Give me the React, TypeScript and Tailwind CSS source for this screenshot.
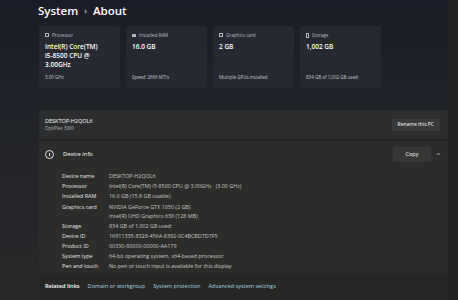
import React from "react";

const font = { fontFamily: '"Open Sans", "Noto Sans", sans-serif' };

function Card({ icon, label, value, foot }: { icon: React.ReactNode; label: string; value: React.ReactNode; foot: string }) {
  return (
    <div className="w-[81px] h-[62px] rounded-[3px] bg-[#262932] flex flex-col px-[6px] pt-[6px] pb-[7px]">
      <div className="flex items-center gap-[3px] text-[4.6px] text-[#b9bcc3] h-[6px]">
        {icon}
        <span>{label}</span>
      </div>
      <div className="mt-[4px] text-[6.5px] leading-[9px] font-semibold text-white">{value}</div>
      <div className="mt-auto text-[4.5px] text-[#c9cbd0]">{foot}</div>
    </div>
  );
}

const Sq = () => <span className="inline-block w-[4px] h-[4px] border-[0.7px] border-[#b9bcc3] rounded-[0.5px]" />;

const rows: [string, string[]][] = [
  ["Device name", ["DESKTOP-H2QOL6"]],
  ["Processor", ["Intel(R) Core(TM) i5-8500 CPU @ 3.00GHz   (3.00 GHz)"]],
  ["Installed RAM", ["16.0 GB (15.8 GB usable)"]],
  ["Graphics card", ["NVIDIA GeForce GTX 1050 (2 GB)", "Intel(R) UHD Graphics 630 (128 MB)"]],
  ["Storage", ["834 GB of 1,002 GB used"]],
  ["Device ID", ["16911335-8328-456A-8392-0C4BCBD7D7F5"]],
  ["Product ID", ["00330-80000-00000-AA179"]],
  ["System type", ["64-bit operating system, x64-based processor"]],
  ["Pen and touch", ["No pen or touch input is available for this display"]],
];

export default function App() {
  return (
    <div style={font} className="w-[458px] h-[300px] overflow-hidden flex bg-gradient-to-b from-[#1a1d27] via-[#23252a] to-[#29292a]">
      <div className="flex-1 flex flex-col pl-[38px]">
        <div className="h-[22px] flex items-center gap-[6px] text-[11.5px] font-semibold text-white">
          <span>System</span>
          <span className="text-[8px] text-[#c8cad0]">›</span>
          <span>About</span>
        </div>
        <div className="mt-[4px] ml-[1px] flex gap-[6px]">
          <Card icon={<Sq />} label="Processor" value={<>Intel(R) Core(TM)<br />i5-8500 CPU @<br />3.00GHz</>} foot="3.00 GHz" />
          <Card icon={<span className="inline-block w-[4px] h-[3px] bg-[#b9bcc3] rounded-[0.5px]" />} label="Installed RAM" value="16.0 GB" foot="Speed: 2666 MT/s" />
          <Card icon={<Sq />} label="Graphics card" value="2 GB" foot="Multiple GPUs installed" />
          <Card icon={<span className="inline-block w-[3px] h-[5px] border-[0.7px] border-[#b9bcc3] rounded-[0.5px]" />} label="Storage" value="1,002 GB" foot="834 GB of 1,002 GB used" />
        </div>
        <div className="mt-[22px] ml-[1px] flex flex-col">
          <div className="h-[29px] bg-[#2c2d2e] rounded-t-[3px] flex items-center pl-[6px] pr-[8px]">
            <div className="flex flex-col">
              <span className="text-[5.5px] text-white leading-[8px]">DESKTOP-H2QOL6</span>
              <span className="text-[4.5px] text-[#b7b8b8] leading-[7px]">OptiPlex 3060</span>
            </div>
            <div className="ml-auto h-[12px] px-[6px] flex items-center rounded-[2px] bg-[#38393a] text-[5px] text-white">Rename this PC</div>
          </div>
          <div className="h-[2px]" />
          <div className="h-[132px] bg-[#2c2d2a] flex flex-col">
            <div className="h-[26px] flex items-center pl-[6px] pr-[7px]">
              <span className="w-[9px] h-[9px] rounded-full border-[0.8px] border-[#e6e6e6] flex items-center justify-center">
                <span className="w-[0.8px] h-[3px] bg-[#e6e6e6]" />
              </span>
              <span className="ml-[9px] text-[5.8px] text-white">Device info</span>
              <div className="ml-auto w-[38px] h-[15px] flex items-center justify-center rounded-[2px] bg-[#363734] text-[5.5px] text-white">Copy</div>
              <svg className="ml-[5px]" width="5" height="4" viewBox="0 0 5 4"><path d="M0.8 3 L2.5 1.3 L4.2 3" stroke="#d0d0d0" strokeWidth="0.8" fill="none" /></svg>
            </div>
            <div className="pl-[23px] flex flex-col mt-[4px]">
              {rows.map(([k, v]) => (
                <div key={k} className={"flex text-[5.4px] " + (v.length > 1 ? "mt-[2px] leading-[9px]" : "leading-[10px]")}>
                  <span className="w-[47px] text-[#e8e8e8]">{k}</span>
                  <div className="flex flex-col text-[#c9c9c6]">
                    {v.map((l) => (
                      <span key={l} className="whitespace-pre">{l}</span>
                    ))}
                  </div>
                </div>
              ))}
            </div>
          </div>
          <div className="h-[27px] bg-[#272725] flex items-center pl-[6px] gap-[8px] text-[5.6px]">
            <span className="text-white font-semibold">Related links</span>
            <span className="text-[#a6d8e6]">Domain or workgroup</span>
            <span className="text-[#a6d8e6]">System protection</span>
            <span className="text-[#a6d8e6]">Advanced system settings</span>
          </div>
        </div>
      </div>
      <div className="w-[10px] bg-[#232321]" />
    </div>
  );
}
